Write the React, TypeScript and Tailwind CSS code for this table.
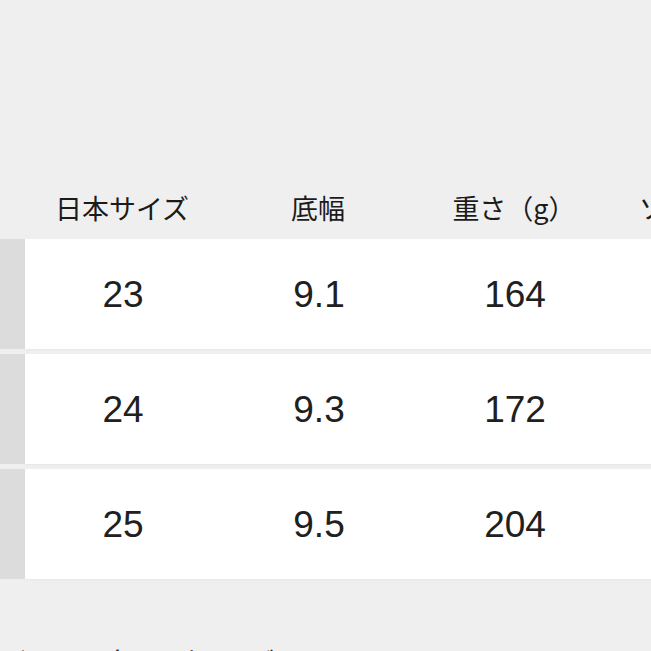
import React from "react";

const font = { fontFamily: '"Liberation Sans", "Noto Sans CJK JP", sans-serif' };

const headers = ["日本サイズ", "底幅", "重さ（g）", "ソール厚さ."];
const rows = [
  ["23", "9.1", "164", "2.5"],
  ["24", "9.3", "172", "2.5"],
  ["25", "9.5", "204", "2.5"],
];

export default function App() {
  return (
    <div
      className="w-[651px] h-[651px] bg-[#efefef] overflow-hidden flex flex-col text-[#1b1b1b]"
      style={font}
    >
      <div className="h-[176px] shrink-0" />
      <div className="flex h-[63px] shrink-0 items-center pl-[24px]">
        {headers.map((h) => (
          <div
            key={h}
            className="w-[196px] shrink-0 text-center text-[27px] leading-none whitespace-nowrap"
            style={{ fontFamily: '"Noto Sans CJK JP", sans-serif' }}
          >
            {h}
          </div>
        ))}
      </div>
      <div className="flex flex-col gap-[5px] shrink-0">
        {rows.map((r) => (
          <div key={r[0]} className="flex h-[110px] shrink-0">
            <div className="w-[25px] shrink-0 bg-[#dcdcdc]" />
            <div className="flex flex-1 items-center bg-white shadow-[0_1px_2px_rgba(0,0,0,0.04)]">
              {r.map((c, i) => (
                <div
                  key={i}
                  className="w-[196px] shrink-0 text-center text-[37px] leading-none text-[#202020]"
                >
                  {c}
                </div>
              ))}
            </div>
          </div>
        ))}
      </div>
      <div
        className="mt-[69px] shrink-0 whitespace-nowrap text-[27px] leading-none text-[#222]"
        style={{ fontFamily: '"Noto Sans CJK JP", sans-serif' }}
      >
        ガーー　色 足別サイズイメージ
      </div>
    </div>
  );
}
